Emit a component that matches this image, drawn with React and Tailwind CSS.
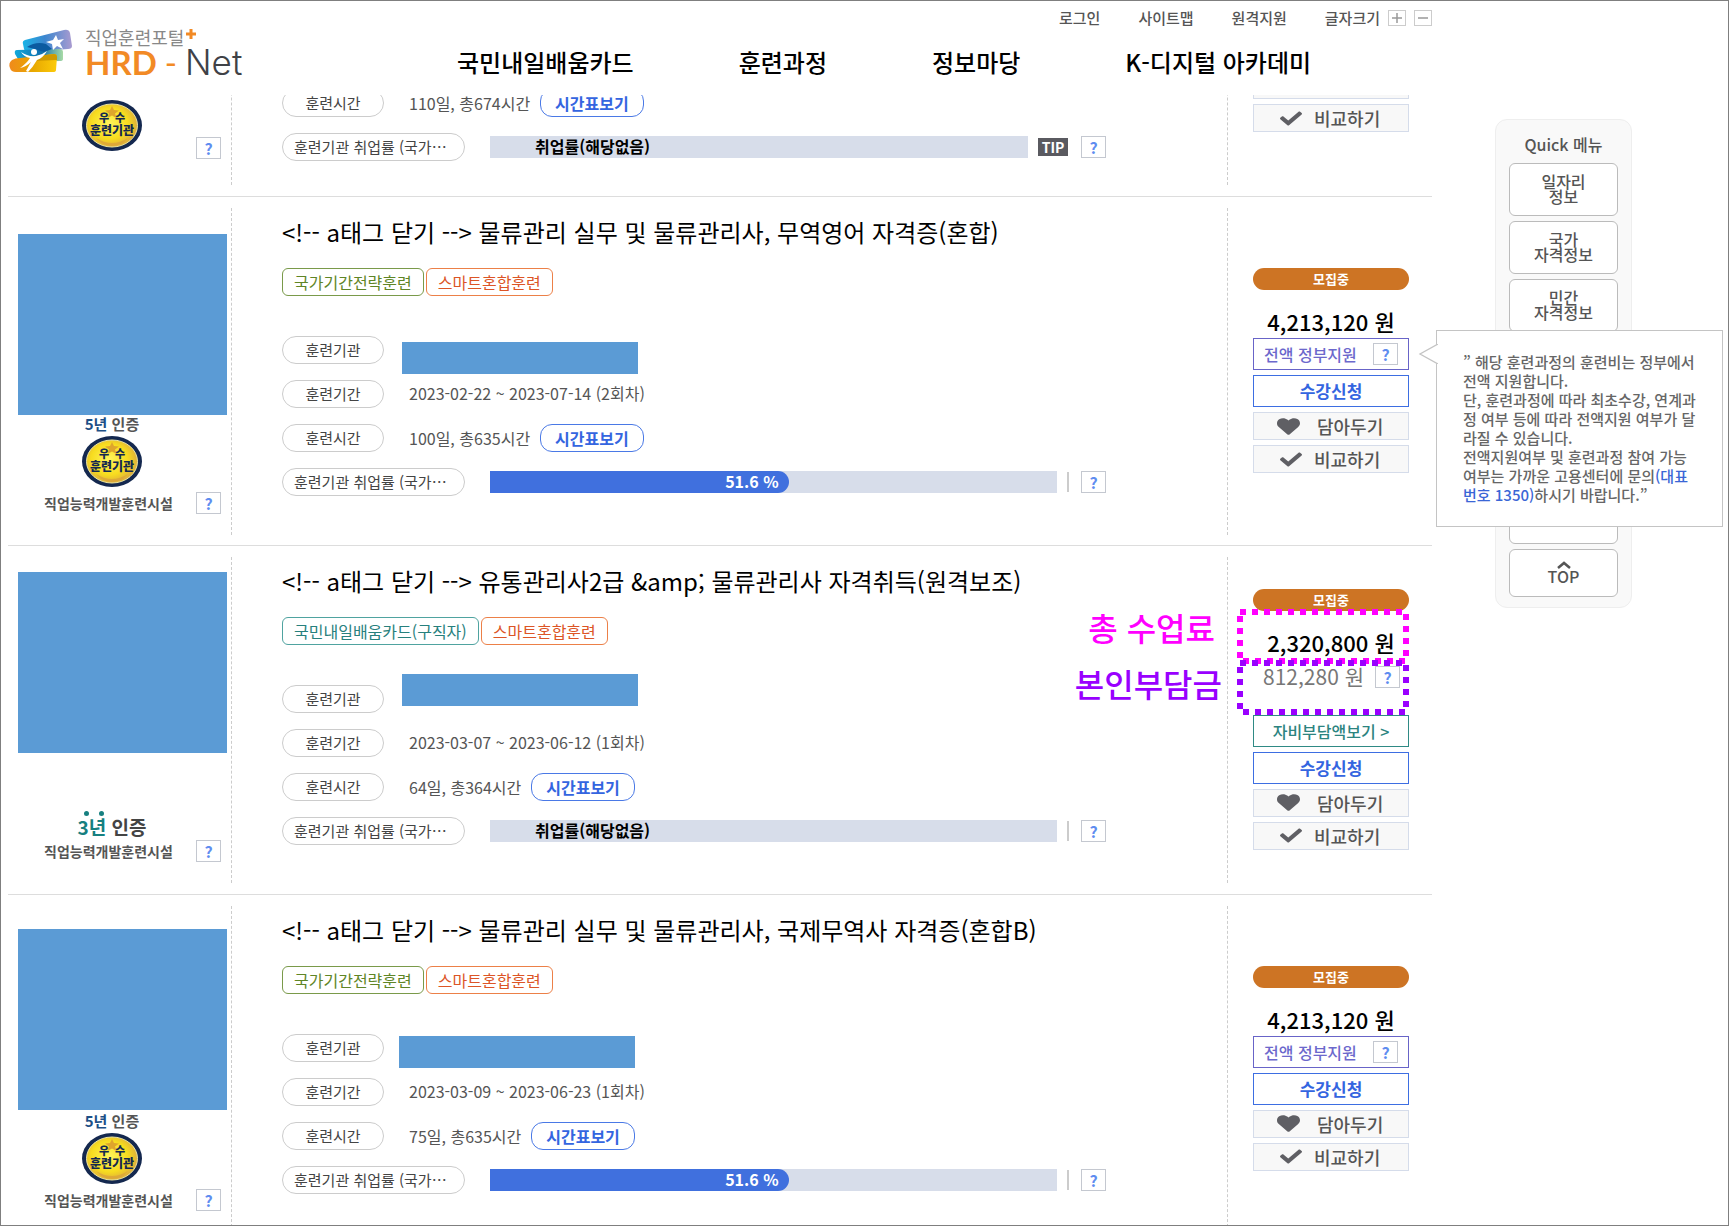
import React from "react";
import { FaCheck, FaHeart } from "react-icons/fa";

const courses = [
  {
    id: 1,
    title: "<!-- a태그 닫기 --> 물류관리 실무 및 물류관리사, 무역영어 자격증(혼합)",
    tag: "국가기간전략훈련",
    tagStyle: "border-[#7a9a4a] text-[#5f8526]",
    period: "2023-02-22 ~ 2023-07-14 (2회차)",
    time: "100일, 총635시간",
    rate: 51.6,
    price: "4,213,120 원",
    years: 5,
    photo: "mt-[26px]",
    mask: "top-[6px] left-[18px]",
    tooltip: true,
  },
  {
    id: 2,
    title: "<!-- a태그 닫기 --> 유통관리사2급 &amp; 물류관리사 자격취득(원격보조)",
    tag: "국민내일배움카드(구직자)",
    tagStyle: "border-[#4fa3a0] text-[#27807d]",
    period: "2023-03-07 ~ 2023-06-12 (1회차)",
    time: "64일, 총364시간",
    rate: null,
    price: "2,320,800 원",
    selfPay: "812,280 원",
    years: 3,
    photo: "mt-[15px]",
    mask: "-top-[11px] left-[18px]",
  },
  {
    id: 3,
    title: "<!-- a태그 닫기 --> 물류관리 실무 및 물류관리사, 국제무역사 자격증(혼합B)",
    tag: "국가기간전략훈련",
    tagStyle: "border-[#7a9a4a] text-[#5f8526]",
    period: "2023-03-09 ~ 2023-06-23 (1회차)",
    time: "75일, 총635시간",
    rate: 51.6,
    price: "4,213,120 원",
    years: 5,
    photo: "mt-[23px]",
    mask: "top-[2px] left-[15px]",
  },
];

function HelpButton() {
  return (
    <button className="flex h-[22px] w-[25px] shrink-0 items-center justify-center border border-[#c4c8d0] bg-white text-base leading-none font-bold text-[#5f8df0]">
      ?
    </button>
  );
}

function Medal() {
  return (
    <svg viewBox="0 0 60 51" className="h-[51px] w-[60px]">
      <defs>
        <radialGradient id="gold" cx="45%" cy="45%" r="60%">
          <stop offset="0" stopColor="#fff45c" />
          <stop offset="0.6" stopColor="#f7dc1f" />
          <stop offset="1" stopColor="#d9a441" />
        </radialGradient>
      </defs>
      <ellipse cx="30" cy="25.5" rx="30" ry="25.5" fill="#14284f" />
      <ellipse cx="30" cy="25.5" rx="25.5" ry="21.5" fill="url(#gold)" stroke="#efe7a0" />
      <path d="M30 6l2 4 5 .4-4 3 1.500 4.600L30 15.500 25.500 18l1.500-4.600-4-3 5-.4z" fill="#dfa52c" />
      <path d="M14 38q16 10 32 0l-5 5q-11 6-22 0z" fill="#d9a03c" opacity="0.7" />
      <text x="22" y="22" textAnchor="middle" fontSize="11" fontWeight="900" fill="#14284f">
        우
      </text>
      <text x="38" y="22" textAnchor="middle" fontSize="11" fontWeight="900" fill="#14284f">
        수
      </text>
      <text x="30" y="35" textAnchor="middle" fontSize="12" fontWeight="900" fill="#14284f">
        훈련기관
      </text>
    </svg>
  );
}

function LogoMark() {
  return (
    <svg viewBox="0 0 64 44" className="h-[44px] w-[64px]" aria-hidden="true">
      <defs>
        <linearGradient id="sky" x1="0" x2="1">
          <stop offset="0" stopColor="#19b3e6" />
          <stop offset="0.45" stopColor="#3c86cf" />
          <stop offset="1" stopColor="#a99bd0" />
        </linearGradient>
        <linearGradient id="mint" x1="0" x2="1">
          <stop offset="0" stopColor="#12a9dc" />
          <stop offset="0.55" stopColor="#0f6fae" />
          <stop offset="1" stopColor="#a8dba5" />
        </linearGradient>
        <linearGradient id="sun" x1="0" x2="1">
          <stop offset="0" stopColor="#f08a1c" />
          <stop offset="0.5" stopColor="#e8a800" />
          <stop offset="1" stopColor="#fccb0a" />
        </linearGradient>
      </defs>
      <path d="M17 11L56 1q5-1 6 3l2 13q0 3-4 3l-40 3q-3 0-4-3l-1-5q-1-3 2-4z" fill="url(#sky)" />
      <path d="M9 21l42-1q4 0 4 3v7q0 2-3 2l-36 1q-4 0-6-3l-3-5q-1-4 2-4z" fill="url(#mint)" />
      <path d="M19 18q9-6 19-3l6 5-8 3q-8-3-17-5z" fill="#0b5aa0" />
      <path d="M4 31q3-2 8-2l34-4q3 0 3 3l-1 13q0 2-3 2H8q-5 0-6-4-2-5 2-8z" fill="url(#sun)" />
      <path d="M28 27l18-2q3 0 3 3v3l-23 1z" fill="#cf9a00" />
      <path d="M48 6l2 5 6-1-4 4 3 6-6-3-4 4-1-6-6-2 7-2z" fill="#fff" />
      <circle cx="26" cy="23" r="3" fill="#fff" />
      <path d="M13 23q7 5 15 4 6-1 11-5-4 7-10 9-4 7-9 12l-2-1 5-9q-5 5-11 6 7-5 10-10-6-1-9-6z" fill="#fff" />
    </svg>
  );
}

function Header() {
  return (
    <header className="flex h-[94px] shrink-0">
      <a href="#" className="flex w-[449px] shrink-0 items-start pt-[28px]">
        <LogoMark />
        <span className="ml-[13px] block">
          <span className="flex h-[17px] items-start text-lg leading-[17px] text-[#888]">
            직업훈련포털
            <svg viewBox="0 0 10 10" className="ml-[2px] h-[10px] w-[10px]" aria-hidden="true">
              <path d="M5 0v10M0 5h10" stroke="#f28a25" strokeWidth="3" />
            </svg>
          </span>
          <span className="flex items-baseline font-[Lato,sans-serif] text-[33px] leading-8">
            <b className="font-bold text-[#f28a25]">HRD</b>
            <span className="px-[8px] text-[#f28a25]">-</span>
            <span className="font-[Inter,sans-serif] text-[35px] leading-8 font-light text-[#3f4247]">Net</span>
          </span>
        </span>
      </a>
      <div className="flex-1">
        <div className="flex h-[34px] items-center justify-end gap-[38px] text-[15px] font-medium text-[#555]">
          <a href="#">로그인</a>
          <a href="#">사이트맵</a>
          <a href="#">원격지원</a>
          <div className="flex items-center gap-2">
            <span>글자크기</span>
            <button aria-label="+" className="flex h-4 w-[18px] items-center justify-center border border-[#ccc]">
              <svg viewBox="0 0 10 10" className="h-[10px] w-[10px]">
                <path d="M5 0v10M0 5h10" stroke="#999" strokeWidth="1.5" />
              </svg>
            </button>
            <button aria-label="-" className="flex h-4 w-[18px] items-center justify-center border border-[#ccc]">
              <svg viewBox="0 0 10 10" className="h-[10px] w-[10px]">
                <path d="M0 5h10" stroke="#999" strokeWidth="1.5" />
              </svg>
            </button>
          </div>
        </div>
        <nav className="flex h-[54px] items-center gap-[105px] text-2xl font-medium text-black">
          <a href="#">국민내일배움카드</a>
          <a href="#">훈련과정</a>
          <a href="#">정보마당</a>
          <a href="#">K-디지털 아카데미</a>
        </nav>
      </div>
      <div className="w-[296px] shrink-0" />
    </header>
  );
}

function InfoLine({ label, children }) {
  return (
    <div className="relative flex h-7 items-center">
      <dt className="flex h-7 w-[102px] shrink-0 items-center justify-center rounded-full border border-[#ccc] text-[15px] text-[#444]">
        {label}
      </dt>
      <dd className="flex items-center text-base text-[#555]">{children}</dd>
    </div>
  );
}

function TimeLine({ time }) {
  return (
    <InfoLine label="훈련시간">
      <span className="ml-[25px]">{time}</span>
      <button className="ml-[10px] h-7 rounded-xl border border-[#4a79e6] px-[14px] leading-[26px] font-bold text-[#3465e0]">
        시간표보기
      </button>
    </InfoLine>
  );
}

function RateLine({ rate, tip }) {
  return (
    <div className="flex h-7 items-center">
      <dt className="flex h-7 w-[183px] shrink-0 items-center rounded-full border border-[#ccc] pl-[11px] text-[15px] whitespace-nowrap text-[#444]">
        훈련기관 취업률 (국가⋯
      </dt>
      <dd className="ml-[25px] flex flex-1 items-center">
        <div className="h-[22px] flex-1 bg-[#d7ddea] text-base leading-[20px] font-bold">
          {rate ? (
            <div
              className="h-full rounded-r-full bg-[#4070de] pr-[10px] text-right text-white"
              style={{ width: `calc(${rate}% + 6px)` }}
            >
              {rate} %
            </div>
          ) : (
            <span className="pl-[45px] text-black">취업률(해당없음)</span>
          )}
        </div>
        {tip ? (
          <span className="mr-[13px] ml-[10px] flex h-[18px] w-[30px] items-center justify-center bg-[#5a5a60] text-sm font-bold text-white">
            TIP
          </span>
        ) : (
          <span className="mr-3 ml-[10px] h-5 w-[2px] bg-[#ccc]" />
        )}
        <HelpButton />
      </dd>
    </div>
  );
}

function WishButton() {
  return (
    <button className="flex h-7 w-full items-center border border-[#d5dcea] bg-[#f8f8f8] pl-[23px] text-lg leading-6 font-medium text-[#555]">
      <FaHeart className="mr-[17px] h-[19px] w-[23px] text-[#5f5f64]" preserveAspectRatio="none" />
      담아두기
    </button>
  );
}

function CompareButton() {
  return (
    <button className="flex h-7 w-full items-center border border-[#d5dcea] bg-[#f8f8f8] pl-[26px] text-lg leading-6 font-medium text-[#555]">
      <FaCheck className="mr-3 h-[19px] w-[22px] text-[#5f5f64]" preserveAspectRatio="none" />
      비교하기
    </button>
  );
}

function SupportTooltip() {
  return (
    <div
      role="tooltip"
      className="absolute -top-[9px] left-full z-20 ml-7 w-[287px] border border-[#c4c4c4] bg-white pt-[21px] pb-[22px] pl-[26px] text-[15px] leading-[19px] font-medium whitespace-nowrap text-[#666]"
    >
      <svg viewBox="0 0 20 20" className="absolute top-[13px] -left-[19px] h-5 w-5" aria-hidden="true">
        <path d="M20 0L2 10l18 10" fill="#fff" stroke="#c4c4c4" strokeWidth="1.3" />
      </svg>
      ” 해당 훈련과정의 훈련비는 정부에서
      <br />
      전액 지원합니다.
      <br />
      단, 훈련과정에 따라 최초수강, 연계과
      <br />
      정 여부 등에 따라 전액지원 여부가 달
      <br />
      라질 수 있습니다.
      <br />
      전액지원여부 및 훈련과정 참여 가능
      <br />
      여부는 가까운 고용센터에 문의<span className="text-[#3a66d6]">(대표</span>
      <br />
      <span className="text-[#3a66d6]">번호 1350)</span>하시기 바랍니다.”
    </div>
  );
}

// dotted frames and captions laid over the two fee lines
function FeeNotes() {
  return (
    <div className="pointer-events-none absolute top-0 right-0 z-10 h-full w-full">
      <svg viewBox="0 0 172 108" className="absolute -top-[2px] right-0 h-[108px] w-[172px]">
        <rect x="3" y="3" width="166" height="49" fill="none" stroke="#ff00ff" strokeWidth="6" strokeDasharray="6 6" />
        <rect x="3" y="54" width="166" height="49" fill="none" stroke="#9900ff" strokeWidth="6" strokeDasharray="6 6" />
      </svg>
      <p className="absolute -top-1 right-full mr-[38px] text-[32px] leading-[40px] font-medium whitespace-nowrap text-[#ff00ff]">
        총 수업료
      </p>
      <p className="absolute top-[52px] right-full mr-[31px] text-[32px] leading-[40px] font-medium whitespace-nowrap text-[#9900ff]">
        본인부담금
      </p>
    </div>
  );
}

function Actions({ course }) {
  return (
    <div className="flex flex-col justify-center border-l border-dashed border-[#ccc] pr-[23px] pb-[2px] pl-[25px]">
      <div className="flex h-[22px] items-center justify-center rounded-full bg-[#cd7424] text-[13px] font-bold text-white">
        모집중
      </div>
      <div className="relative">
        <p className="h-12 pt-[15px] text-center text-[22px] leading-8 font-medium text-black">{course.price}</p>
        {course.selfPay && (
          <div className="h-14 pl-[10px]">
            <div className="flex h-9 items-center text-[21px] text-[#777]">
              {course.selfPay}
              <span className="mr-[9px] ml-auto text-base">
                <HelpButton />
              </span>
            </div>
          </div>
        )}
        {course.selfPay && <FeeNotes />}
      </div>
      <div className="flex flex-col gap-[5px]">
        {course.selfPay ? (
          <button className="h-8 border border-[#2f8a85] text-base leading-[28px] font-medium text-[#2c8480]">
            자비부담액보기 &gt;
          </button>
        ) : (
          <div className="relative flex h-8 items-center justify-between border border-[#6864c8] px-[10px] text-base font-medium text-[#6c68cc]">
            전액 정부지원
            <HelpButton />
            {course.tooltip && <SupportTooltip />}
          </div>
        )}
        <button className="h-8 border border-[#3d6ee2] text-[17px] leading-[28px] font-bold text-[#3465e0]">
          수강신청
        </button>
        <WishButton />
        <CompareButton />
      </div>
    </div>
  );
}

function Institution({ course }) {
  return (
    <div className="flex flex-col items-start justify-between border-r border-dashed border-[#ccc] pb-[19px] pl-[10px]">
      <div className={`h-[181px] w-[209px] bg-[#5b9bd5] ${course.photo}`} />
      <div className="w-full">
        <div className="flex w-[188px] flex-col items-center">
          {course.years === 5 ? (
            <>
              <p className="mb-[3px] text-[15px] leading-[18px] font-bold text-[#555]">
                <span className="text-[#1d4f86]">5년</span> 인증
              </p>
              <div className="mb-[3px]">
                <Medal />
              </div>
            </>
          ) : (
            <>
              <svg viewBox="0 0 20 5" className="mr-[36px] h-[5px] w-[20px]" aria-hidden="true">
                <circle cx="2.500" cy="2.500" r="2.500" fill="#178080" />
                <circle cx="17.500" cy="2.500" r="2.500" fill="#178080" />
              </svg>
              <p className="text-[19px] leading-[22px] font-bold text-[#444]">
                <span className="text-[#178080]">3년</span> 인증
              </p>
            </>
          )}
        </div>
        <div className="flex items-center justify-between pr-[10px] pl-[26px] text-sm leading-[26px] font-bold text-[#555]">
          직업능력개발훈련시설
          <HelpButton />
        </div>
      </div>
    </div>
  );
}

function CourseRow({ course }) {
  return (
    <li className="grid h-[349px] shrink-0 grid-cols-[224px_1fr_205px] border-b border-[#ddd] py-[11px]">
      <Institution course={course} />
      <div className="pt-[9px] pr-[121px] pl-[50px]">
        <h2 className="text-2xl leading-[30px] whitespace-nowrap text-black">{course.title}</h2>
        <div className="mt-[21px] flex gap-[2px] text-base leading-[26px]">
          <span className={`rounded-md border px-[11px] ${course.tagStyle}`}>{course.tag}</span>
          <span className="rounded-md border border-[#ec8048] px-[11px] text-[#dc5526]">스마트혼합훈련</span>
        </div>
        <dl className="mt-10 flex flex-col gap-4">
          <InfoLine label="훈련기관">
            <span className="relative">
              <span className={`absolute h-[32px] w-[236px] -translate-y-[14px] bg-[#5b9bd5] ${course.mask}`} />
            </span>
          </InfoLine>
          <InfoLine label="훈련기간">
            <span className="ml-[25px] pb-[3px]">{course.period}</span>
          </InfoLine>
          <TimeLine time={course.time} />
          <RateLine rate={course.rate} />
        </dl>
      </div>
      <Actions course={course} />
    </li>
  );
}

// tail of the row that has scrolled under the header
function ScrolledRow() {
  return (
    <li className="flex h-[102px] shrink-0 flex-col justify-end overflow-hidden border-b border-[#ddd] pb-[11px]">
      <div className="grid h-[326px] shrink-0 grid-cols-[224px_1fr_205px]">
        <div className="flex items-end justify-between border-r border-dashed border-[#ccc] pr-[10px] pb-[26px] pl-[74px]">
          <div className="pb-[8px]">
            <Medal />
          </div>
          <HelpButton />
        </div>
        <dl className="flex flex-col justify-end gap-4 pr-[121px] pb-[24px] pl-[50px]">
          <TimeLine time="110일, 총674시간" />
          <RateLine tip />
        </dl>
        <div className="flex flex-col justify-end gap-[5px] border-l border-dashed border-[#ccc] pr-[23px] pb-[53px] pl-[25px]">
          <WishButton />
          <CompareButton />
        </div>
      </div>
    </li>
  );
}

function QuickMenu() {
  return (
    <aside className="w-[296px] shrink-0 pt-[24px] pl-[63px]">
      <div className="flex h-[489px] w-[137px] flex-col gap-[5px] rounded-xl border border-[#eee] bg-[#f9f9f9] px-[13px] pt-[14px] pb-[10px] text-base leading-[15px] font-medium text-[#555]">
        <h3 className="h-[24px] text-center leading-[20px]">Quick 메뉴</h3>
        <button className="h-[53px] shrink-0 rounded-md border border-[#bbb] bg-white pb-[2px]">
          일자리
          <br />
          정보
        </button>
        <button className="h-[53px] shrink-0 rounded-md border border-[#bbb] bg-white pb-[2px]">
          국가
          <br />
          자격정보
        </button>
        <button className="h-[53px] shrink-0 rounded-md border border-[#bbb] bg-white pb-[2px]">
          민간
          <br />
          자격정보
        </button>
        <div className="flex-1 rounded-md border border-[#bbb] bg-white" />
        <button className="flex h-[48px] shrink-0 flex-col items-center justify-center rounded-md border border-[#bbb] bg-white pb-[2px]">
          <svg viewBox="0 0 14 8" className="h-2 w-[14px]" aria-hidden="true">
            <path d="M1 7l6-5 6 5" fill="none" stroke="#555" strokeWidth="2.500" />
          </svg>
          TOP
        </button>
      </div>
    </aside>
  );
}

export default function App() {
  return (
    <div
      lang="ko"
      className="flex h-screen flex-col overflow-hidden border border-[#7f7f7f] bg-white pl-[7px] font-['Noto_Sans_CJK_KR',sans-serif]"
    >
      <Header />
      <div className="flex flex-1">
        <ul className="min-w-0 flex-1">
          <ScrolledRow />
          {courses.map((course) => (
            <CourseRow key={course.id} course={course} />
          ))}
        </ul>
        <QuickMenu />
      </div>
    </div>
  );
}
